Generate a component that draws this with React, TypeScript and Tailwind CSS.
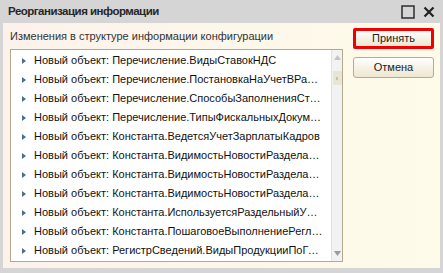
import React from "react";

const rows = [
  "Новый объект: Перечисление.ВидыСтавокНДС",
  "Новый объект: Перечисление.ПостановкаНаУчетВРаннем",
  "Новый объект: Перечисление.СпособыЗаполненияСтавок",
  "Новый объект: Перечисление.ТипыФискальныхДокументов",
  "Новый объект: Константа.ВедетсяУчетЗарплатыКадров",
  "Новый объект: Константа.ВидимостьНовостиРазделаБух",
  "Новый объект: Константа.ВидимостьНовостиРазделаЗар",
  "Новый объект: Константа.ВидимостьНовостиРазделаНал",
  "Новый объект: Константа.ИспользуетсяРаздельныйУчетНДС",
  "Новый объект: Константа.ПошаговоеВыполнениеРегламентных",
  "Новый объект: РегистрСведений.ВидыПродукцииПоГруппам",
];

const Marker = () => (
  <svg width="6" height="8" viewBox="0 0 6 8" className="shrink-0">
    <path d="M1 1 L5 4 L1 7 Z" fill="#4a6d96" />
  </svg>
);

const App = () => {
  return (
    <div
      className="w-[443px] h-[273px] bg-[#d5d5d5] flex flex-col text-[#1a1a1a]"
      style={{ fontFamily: '"Liberation Sans", Arial, sans-serif' }}
    >
      <div className="h-[23px] shrink-0 flex items-center pl-[8px] pr-[6px]">
        <span className="text-[11.5px] font-bold tracking-[-0.5px] text-[#262626] flex-1 pt-[1px]">
          Реорганизация информации
        </span>
        <svg width="14" height="14" viewBox="0 0 14 14" className="mr-[8px]">
          <rect x="1" y="1" width="12" height="12" fill="none" stroke="#222" strokeWidth="1.4" />
        </svg>
        <svg width="12" height="12" viewBox="0 0 12 12" className="mr-[2px]">
          <path d="M1.5 1.5 L10.5 10.5 M10.5 1.5 L1.5 10.5" stroke="#222" strokeWidth="2.2" />
        </svg>
      </div>
      <div className="flex-1 mx-[3px] mb-[5px] bg-gradient-to-r from-[#fcf2ec] to-[#fefbe9] flex pl-[7px] pr-[6px]">
        <div className="flex flex-col w-[333px]">
          <div className="h-[26px] flex items-center text-[11px] text-[#333]">
            Изменения в структуре информации конфигурации
          </div>
          <div className="flex-1 mb-[6px] border border-[#b3a98d] bg-white flex">
            <div className="flex-1 min-w-0 pt-[1px]">
              {rows.map((r) => (
                <div key={r} className="h-[19px] flex items-center pl-[10px] pr-[8px] gap-[7px]">
                  <Marker />
                  <span className="text-[11px] text-[#111] truncate">{r}</span>
                </div>
              ))}
            </div>
            <div className="w-[11px] bg-[#f2f2f2] border-l border-[#e2e2e2] flex flex-col items-center justify-between py-[5px]">
              <div className="flex flex-col items-center gap-[11px]">
                <svg width="7" height="5" viewBox="0 0 7 5">
                  <path d="M0 5 L3.5 0 L7 5 Z" fill="#c5c5c5" />
                </svg>
                <div className="w-[9px] h-[14px] bg-[#e8e4d6] flex items-center justify-center">
                  <div className="w-[2px] h-[3px] bg-[#c9c2aa]" />
                </div>
              </div>
              <svg width="7" height="5" viewBox="0 0 7 5">
                <path d="M0 0 L7 0 L3.5 5 Z" fill="#9a9a9a" />
              </svg>
            </div>
          </div>
        </div>
        <div className="flex-1 flex flex-col items-end pt-[5px] gap-[8px]">
          <button className="w-[81px] h-[21px] rounded-[2px] border-[3px] border-[#f00000] bg-gradient-to-b from-white to-[#eee6cf] text-[11px] text-[#222] flex items-center justify-center">
            Принять
          </button>
          <button className="w-[81px] h-[21px] rounded-[3px] border border-[#b5ac93] bg-gradient-to-b from-white to-[#eee6cf] text-[11px] text-[#222] flex items-center justify-center">
            Отмена
          </button>
        </div>
      </div>
    </div>
  );
};

export default App;
